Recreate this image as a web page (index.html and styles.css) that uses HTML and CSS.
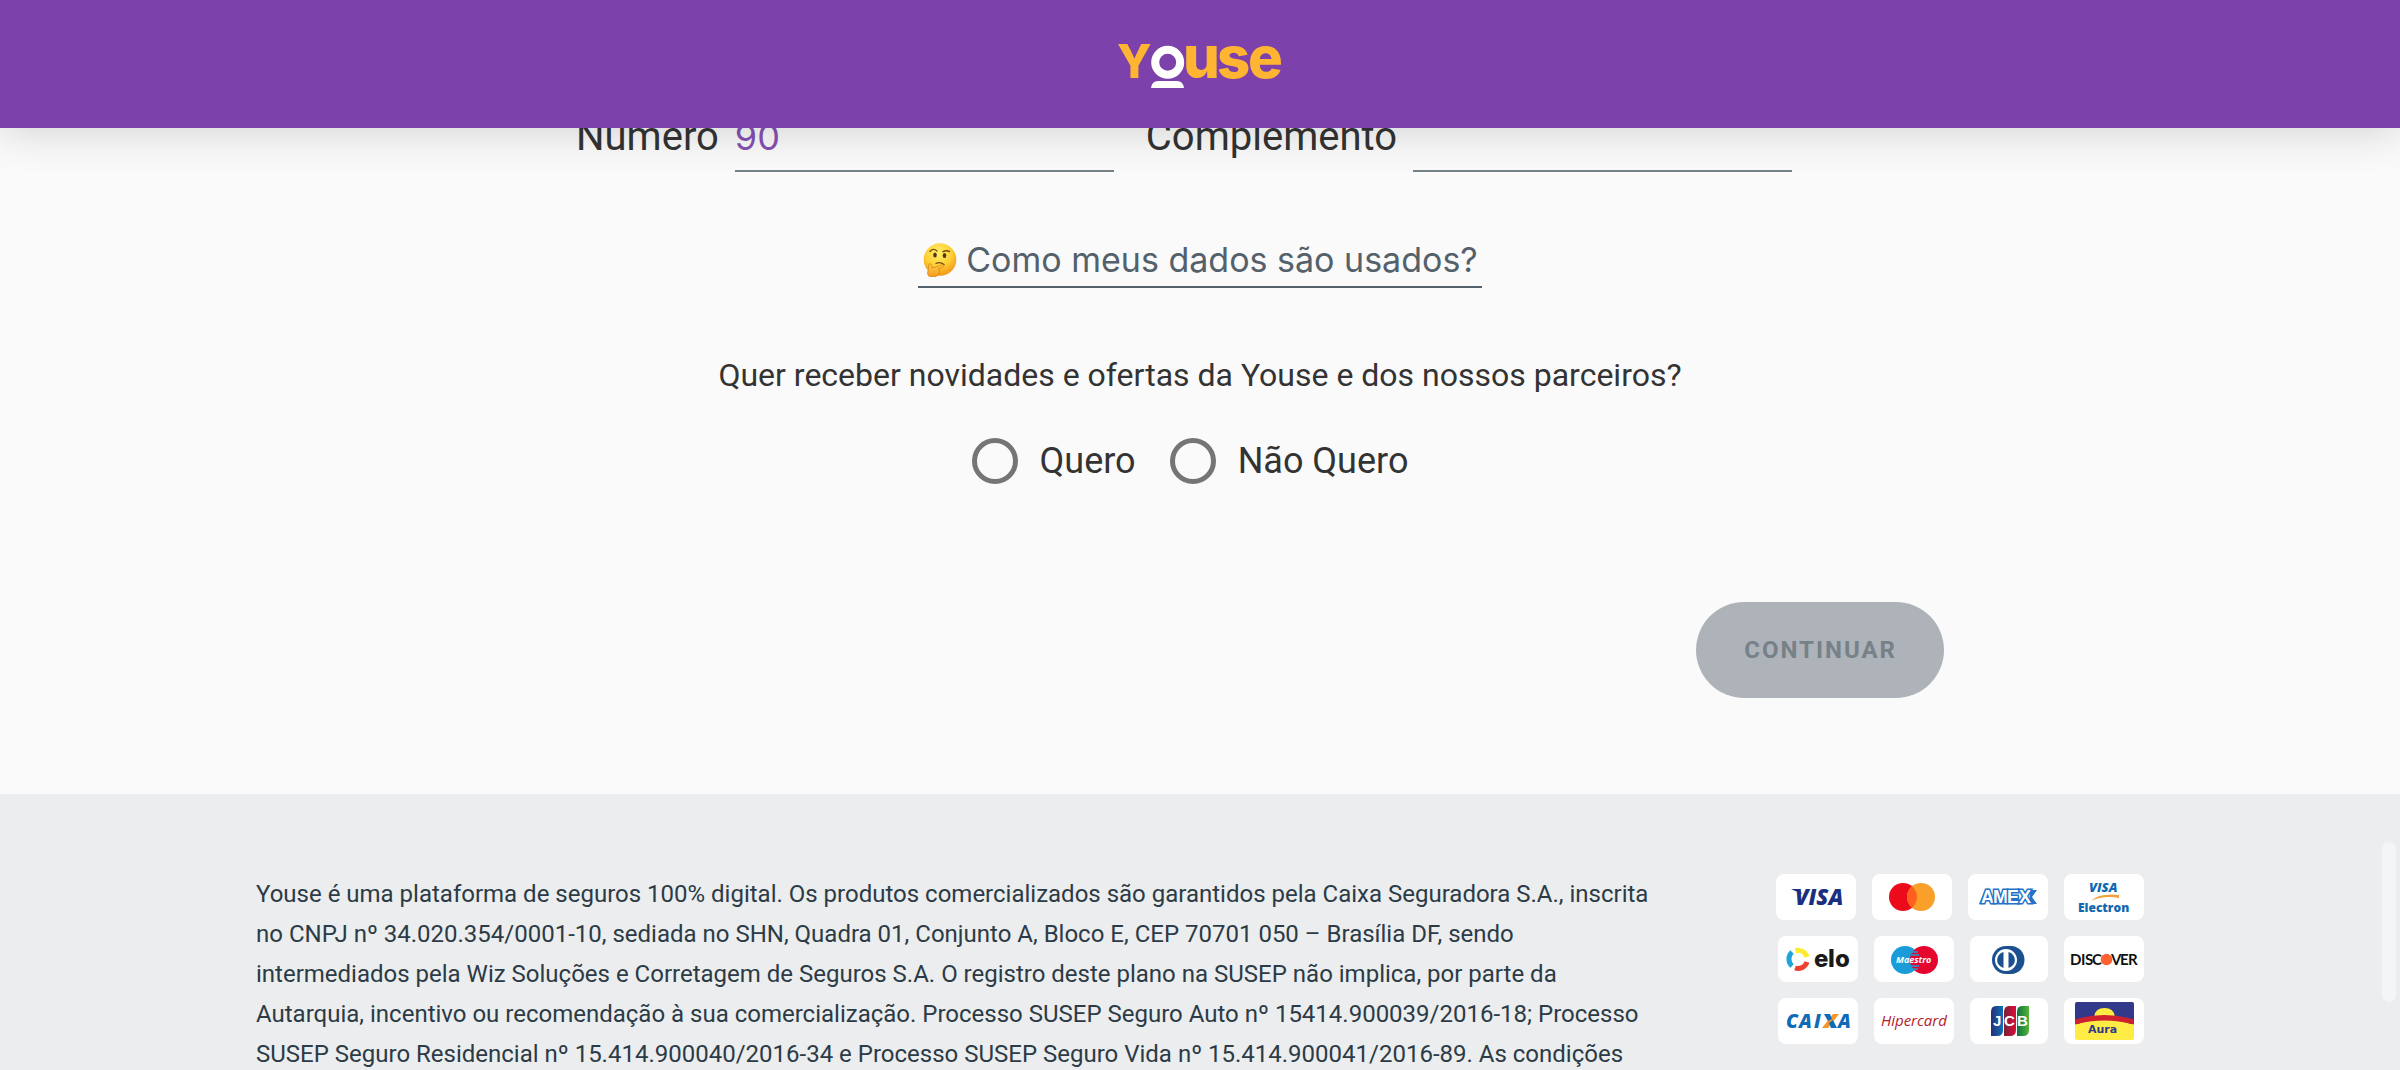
FILE: index.html
```html
<!DOCTYPE html>
<html lang="pt-BR">
<head>
<meta charset="utf-8">
<meta name="viewport" content="width=device-width, initial-scale=1">
<title>Youse</title>
<link rel="stylesheet" href="styles.css">
</head>
<body>
<div class="page">
  <header class="header">
    <svg class="brand" width="168" height="46" viewBox="0 0 168 46" role="img" aria-label="Youse">
      <text class="brand-cap" x="1" y="37">Y</text>
      <circle cx="51.700" cy="21.300" r="12.500" fill="none" stroke="#fff" stroke-width="8"/>
      <path d="M35 47q1-7 7-7h19q6 0 7 7z" fill="#fff"/>
      <text class="brand-low" x="67 101 132" y="37">use</text>
    </svg>
  </header>

  <main class="main">
    <form class="form">
      <div class="fields">
        <label class="label" for="numero">Número</label>
        <input class="input" id="numero" type="text" value="90">
        <label class="label" for="complemento">Complemento</label>
        <input class="input" id="complemento" type="text">
      </div>

      <a class="data-link" href="#dados">
        <svg class="emoji" width="34" height="34" viewBox="0 0 34 34" aria-hidden="true">
          <defs>
            <radialGradient id="face" cx="45%" cy="30%" r="75%">
              <stop offset="0" stop-color="#fff06a"/><stop offset=".55" stop-color="#fdcf34"/><stop offset="1" stop-color="#f28b12"/>
            </radialGradient>
            <linearGradient id="hand" x1="0" y1="0" x2="0" y2="1">
              <stop offset="0" stop-color="#ffd04a"/><stop offset="1" stop-color="#f39a1c"/>
            </linearGradient>
          </defs>
          <circle cx="17" cy="16.500" r="16.300" fill="url(#face)"/>
          <path d="M7 8.500Q10 4.500 14 8M20 8.700Q23 6.800 26.500 8.500" fill="none" stroke="#7a4a12" stroke-width="1.400" stroke-linecap="round"/>
          <ellipse cx="12" cy="12" rx="1.800" ry="2.500" fill="#5a3210"/>
          <ellipse cx="21.500" cy="12.500" rx="1.800" ry="2.500" fill="#5a3210"/>
          <path d="M13 20.500Q17 18.500 21 21.500" fill="none" stroke="#7a4a12" stroke-width="1.300" stroke-linecap="round"/>
          <path d="M6 21c2-1 3 1 3 4l10-3c2-.5 3 1 1 2l-5 2c2 1 2 2 1 3 1 3-3 5-7 5-4 0-5-3-4-6z" fill="url(#hand)" stroke="#d97b10" stroke-width=".700"/>
        </svg>
        <span>Como meus dados são usados?</span>
      </a>

      <fieldset class="offers">
        <legend class="question">Quer receber novidades e ofertas da Youse e dos nossos parceiros?</legend>
        <div class="options">
          <label class="option"><input class="radio" type="radio" name="ofertas" value="sim">Quero</label>
          <label class="option"><input class="radio" type="radio" name="ofertas" value="nao">Não Quero</label>
        </div>
      </fieldset>

      <div class="actions">
        <button class="submit" type="submit" disabled>CONTINUAR</button>
      </div>
    </form>
  </main>

  <footer class="footer">
    <div class="footer-inner">
      <p class="legal">Youse é uma plataforma de seguros 100% digital. Os produtos comercializados são garantidos pela Caixa Seguradora S.A., inscrita no CNPJ nº 34.020.354/0001-10, sediada no SHN, Quadra 01, Conjunto A, Bloco E, CEP 70701 050 – Brasília DF, sendo intermediados pela Wiz Soluções e Corretagem de Seguros S.A. O registro deste plano na SUSEP não implica, por parte da Autarquia, incentivo ou recomendação à sua comercialização. Processo SUSEP Seguro Auto nº 15414.900039/2016-18; Processo SUSEP Seguro Residencial nº 15.414.900040/2016-34 e Processo SUSEP Seguro Vida nº 15.414.900041/2016-89. As condições</p>
      <div class="cards">
        <div class="card-row">
          <svg class="card" viewBox="0 0 80 46" role="img" aria-label="Visa">
            <path d="M15 15h8l3 5z" fill="#1a2f7f"/>
            <text class="open" x="19" y="31" font-size="22" fill="#1a2f7f">VISA</text>
          </svg>
          <svg class="card" viewBox="0 0 80 46" role="img" aria-label="Mastercard">
            <circle cx="31" cy="23" r="14" fill="#eb0b1b"/><circle cx="49" cy="23" r="14" fill="#f8a029"/>
            <path d="M40 12.300a14 14 0 0 1 0 21.400a14 14 0 0 1 0-21.400z" fill="#ff5f1f"/>
          </svg>
          <svg class="card" viewBox="0 0 80 46" role="img" aria-label="Amex">
            <path d="M17 16h4L15 30h-4zM62 16h7l-5 7 5 7h-8z" fill="#2473c8"/>
            <text class="amex" x="13 25 39 51" y="29">AMEX</text>
          </svg>
          <svg class="card" viewBox="0 0 80 46" role="img" aria-label="Visa Electron">
            <text class="open" x="25" y="18" font-size="13" fill="#0f68b0">VISA</text>
            <path d="M27 27q8-8 28-6v3q-16-3-28 3z" fill="#f2a03c"/>
            <text class="electron" x="14" y="38" font-size="12" fill="#0f68b0">Electron</text>
          </svg>
        </div>
        <div class="card-row">
          <svg class="card" viewBox="0 0 80 46" role="img" aria-label="Elo">
            <g fill="none" stroke-width="5">
              <path d="M17.500 14.500A9.500 9.500 0 0 1 29 21" stroke="#fdec2f"/>
              <path d="M29 26A9.500 9.500 0 0 1 17 32" stroke="#ee4030"/>
              <path d="M14 30A9.500 9.500 0 0 1 14 16" stroke="#1fa5dc"/>
            </g>
            <text class="elo" x="36 50 57" y="31">elo</text>
          </svg>
          <svg class="card" viewBox="0 0 80 46" role="img" aria-label="Maestro">
            <circle cx="31" cy="24" r="14" fill="#1a9cd8"/><circle cx="50" cy="24" r="14" fill="#e4062d"/>
            <path d="M38 16h6M37 19h8M37 30h8M38 33h6" stroke="#1a9cd8" stroke-width="1.500"/>
            <text class="maestro" x="22" y="27">Maestro</text>
          </svg>
          <svg class="card card-narrow" viewBox="0 0 78 46" role="img" aria-label="Diners Club">
            <path d="M36 10h6c8 1 12.500 7 12.500 14S49 38 41 38h-5a14 14 0 0 1 0-28z" fill="#1b5190"/>
            <circle cx="36" cy="24" r="11" fill="#fff"/>
            <path d="M33.500 16v16a8.200 8.200 0 0 1 0-16zM38.500 16v16a8.200 8.200 0 0 0 0-16z" fill="#1b5190"/>
          </svg>
          <svg class="card" viewBox="0 0 80 46" role="img" aria-label="Discover">
            <text class="discover" x="6 17 21 28" y="29">DISC</text>
            <circle cx="42.500" cy="23.500" r="5.800" fill="#ff6230"/>
            <text class="discover" x="47 56 64" y="29">VER</text>
          </svg>
        </div>
        <div class="card-row">
          <svg class="card" viewBox="0 0 80 46" role="img" aria-label="Caixa">
            <path d="M44 30h6l11-14h-6z" fill="#f4972a"/>
            <text class="open" x="8 21 36 60" y="30" font-size="19" fill="#0f6ab8">CAIA</text>
            <path d="M46 16h6l2 5-4 2zM51 25l4-3 4 8h-6z" fill="#0f6ab8"/>
          </svg>
          <svg class="card" viewBox="0 0 80 46" role="img" aria-label="Hipercard">
            <text class="hiper" x="7" y="28">Hipercard</text>
          </svg>
          <svg class="card card-narrow" viewBox="0 0 78 46" role="img" aria-label="JCB">
            <defs>
              <linearGradient id="jcb-b"><stop offset="0" stop-color="#2a2d74"/><stop offset="1" stop-color="#0b70b8"/></linearGradient>
              <linearGradient id="jcb-r"><stop offset="0" stop-color="#762237"/><stop offset="1" stop-color="#e00a3a"/></linearGradient>
              <linearGradient id="jcb-g"><stop offset="0" stop-color="#0d7040"/><stop offset="1" stop-color="#56b53c"/></linearGradient>
            </defs>
            <path d="M26 8h7v24q0 6-6 6h-6V14q0-6 5-6z" fill="url(#jcb-b)"/>
            <path d="M39 8h7v24q0 6-6 6h-6V14q0-6 5-6z" fill="url(#jcb-r)"/>
            <path d="M52 8h7v24q0 6-6 6h-6V14q0-6 5-6z" fill="url(#jcb-g)"/>
            <text class="jcb" x="23 34 47" y="28">JCB</text>
          </svg>
          <svg class="card" viewBox="0 0 80 46" role="img" aria-label="Aura">
            <rect x="11" y="4" width="59" height="38" rx="2" fill="#feec45"/>
            <path d="M13 4h55q2 0 2 2v20H11V6q0-2 2-2z" fill="#32388a"/>
            <path d="M30 19q1-9 10.500-9T51 19z" fill="#feec45"/>
            <path d="M11 27q28-11 59 0v8H11z" fill="#feec45"/>
            <path d="M11 21.500q29-9 59 0v5q-30-8-59 0z" fill="#cf2030"/>
            <text class="aura" x="24" y="35">Aura</text>
          </svg>
        </div>
      </div>
    </div>
  </footer>
  <div class="thumb" aria-hidden="true"></div>
</div>
</body>
</html>
```
FILE: styles.css
```css
* { box-sizing: border-box; }
body {
  margin: 0;
  background: #fafafa;
  color: #333;
  font-family: Roboto, "Liberation Sans", sans-serif;
}
.page {
  position: relative;
  height: 100vh;
  overflow: hidden;
}
.header {
  position: fixed;
  top: 0;
  left: 0;
  right: 0;
  z-index: 2;
  height: 128px;
  display: flex;
  align-items: center;
  justify-content: center;
  background: #7d41ab;
  box-shadow: 0 4px 40px rgba(0, 0, 0, .16);
}
.brand { display: block; overflow: visible; }
.brand-cap, .brand-low {
  font-family: Inter, sans-serif;
  font-weight: 800;
  fill: #ffb432;
}
.brand-cap { font-size: 46px; }
.brand-low { font-size: 58px; }

.main { padding: 100px 32px 96px; }
.form {
  max-width: 1488px;
  margin: 0 auto;
  display: flex;
  flex-direction: column;
  align-items: center;
}
.fields {
  display: flex;
  align-items: center;
  width: 100%;
  padding: 0 120px;
}
.label { font-size: 40px; margin-right: 16px; }
.input {
  flex: 1;
  min-width: 0;
  height: 72px;
  margin-right: 32px;
  padding: 4px 0 0;
  border: 0;
  border-bottom: 2px solid #768188;
  border-radius: 0;
  outline: 0;
  background: transparent;
  color: #8552b3;
  font-family: Inter, sans-serif;
  font-size: 36px;
}
.data-link {
  display: flex;
  align-items: center;
  gap: 9px;
  margin-top: 62px;
  padding: 0 4px 0 5px;
  border-bottom: 2px solid #54616b;
  color: #54616b;
  font-family: Inter, sans-serif;
  font-size: 34px;
  line-height: 52px;
  text-decoration: none;
}
.offers {
  margin: 63px 0 0;
  padding: 0;
  border: 0;
  min-width: 0;
}
.question {
  padding: 0;
  font-size: 32px;
  line-height: 48px;
}
.options {
  display: flex;
  justify-content: center;
  gap: 14px;
  margin-top: 38px;
}
.option {
  display: flex;
  align-items: center;
  gap: 22px;
  margin-right: 20px;
  font-size: 36px;
  line-height: 48px;
}
.radio {
  appearance: none;
  width: 46px;
  height: 46px;
  margin: 0;
  border: 5px solid #757575;
  border-radius: 50%;
}
.actions {
  display: flex;
  justify-content: flex-end;
  width: 100%;
  margin-top: 117px;
}
.submit {
  height: 96px;
  padding: 0 47px 0 48px;
  border: 0;
  border-radius: 48px;
  background: #aeb2b9;
  color: #768188;
  font-family: Roboto, sans-serif;
  font-size: 24px;
  font-weight: 700;
  letter-spacing: 2px;
}

.footer { background: #ebedee; padding: 80px 32px; }
.footer-inner {
  display: flex;
  align-items: flex-start;
  gap: 120px;
  max-width: 1888px;
  margin: 0 auto;
}
.legal {
  flex: 1;
  margin: 0;
  color: #2c3b46;
  font-size: 24px;
  line-height: 40px;
}
.cards { display: grid; gap: 16px; }
.card-row { display: flex; justify-content: flex-end; gap: 16px; }
.card {
  width: 80px;
  height: 46px;
  border-radius: 8px;
  background: #fff;
}
.card-narrow { width: 78px; }
.open { font-family: "Open Sans", sans-serif; font-weight: 800; font-style: italic; }
.amex {
  font-family: "Liberation Sans", sans-serif;
  font-size: 18px;
  font-weight: 700;
  fill: #fff;
  stroke: #2473c8;
  stroke-width: 3px;
  paint-order: stroke;
}
.maestro { font-family: "Open Sans", sans-serif; font-size: 9px; font-weight: 700; font-style: italic; fill: #fff; }
.electron { font-family: "Open Sans", sans-serif; font-weight: 800; }
.elo { font-family: Inter, sans-serif; font-size: 24px; font-weight: 800; fill: #1a1a1a; }
.discover { font-family: Lato, sans-serif; font-size: 15px; font-weight: 700; fill: #111; }
.hiper { font-family: "Open Sans", sans-serif; font-size: 15px; font-style: italic; fill: #b5202c; }
.jcb { font-family: "Liberation Sans", sans-serif; font-size: 15px; font-weight: 700; fill: #fff; }
.aura { font-family: "DejaVu Sans", sans-serif; font-size: 11px; font-weight: 700; fill: #32388a; }

.thumb {
  position: absolute;
  right: 4px;
  bottom: 68px;
  width: 14px;
  height: 160px;
  border-radius: 7px;
  background: #f4f5f7;
}
```
